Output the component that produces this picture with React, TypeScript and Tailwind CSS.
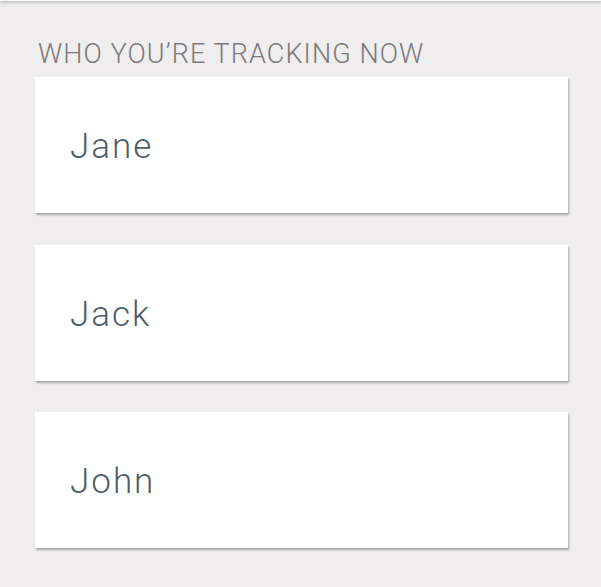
export default function App() {
  const names = ["Jane", "Jack", "John"];
  return (
    <div className="w-[601px] h-[587px] bg-[#efedee] overflow-hidden relative" style={{ fontFamily: "Roboto, 'Liberation Sans', sans-serif" }}>
      <div className="h-[1px] bg-[#f7f6f6] shadow-[0_1px_3px_rgba(0,0,0,0.5)]" />
      <div className="pl-[35px] pr-[33px] pt-[38px]">
        <div className="pl-[3px] text-[27px] leading-[30px] font-light text-[#7a797b] tracking-[1.1px]">
          WHO YOU’RE TRACKING NOW
        </div>
        <div className="mt-[8px] flex flex-col">
          {names.map((n, i) => (
            <div
              key={n}
              className={
                "h-[136px] bg-white flex items-center pl-[35px] pt-[4px] shadow-[1px_2px_2px_rgba(0,0,0,0.3)] " +
                (i === 1 ? "mt-[32px]" : i === 2 ? "mt-[31px]" : "")
              }
            >
              <span className="text-[35px] font-light text-[#4f5d69] tracking-[2px]">{n}</span>
            </div>
          ))}
        </div>
      </div>
    </div>
  );
}
